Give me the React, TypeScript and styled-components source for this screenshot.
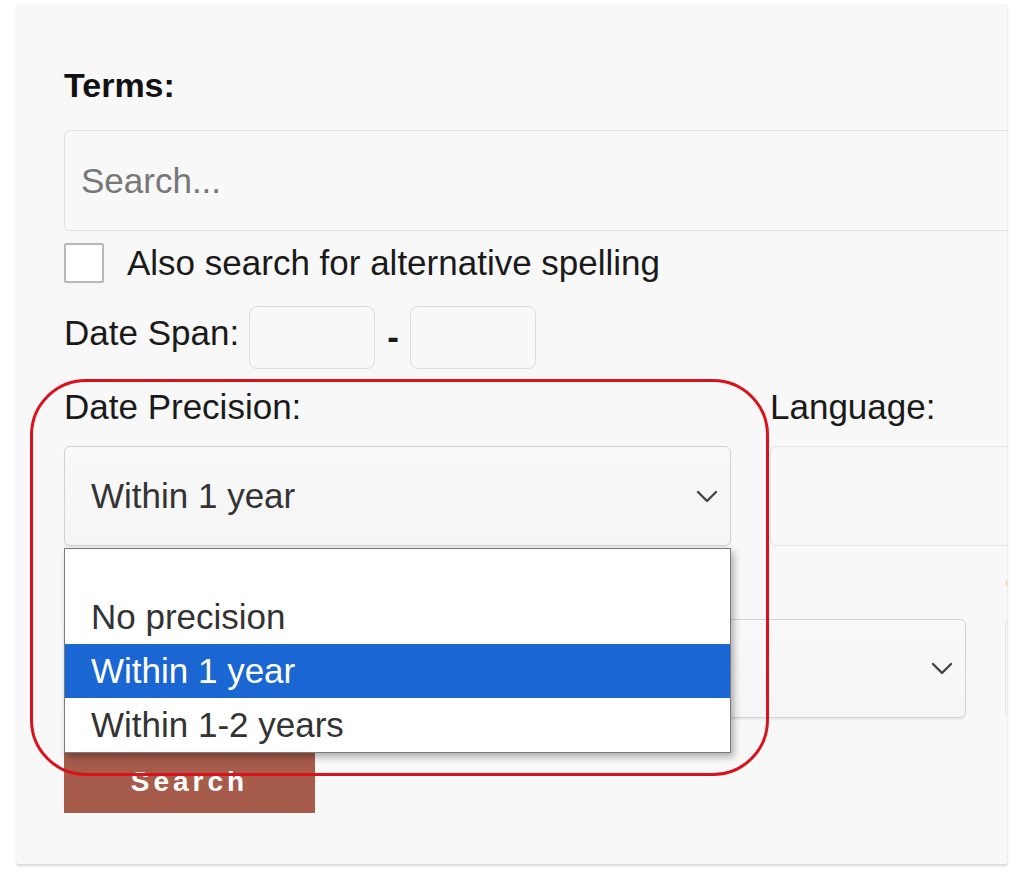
import styled, { createGlobalStyle } from "styled-components";

const GlobalStyle = createGlobalStyle`
  html, body {
    margin: 0;
    padding: 0;
    background: #fff;
  }
  body {
    font-family: "Liberation Sans", Arial, sans-serif;
    color: #1a1a1a;
  }
`;

const precisionOptions = ["", "No precision", "Within 1 year", "Within 1-2 years"];

const Chevron = () => (
  <svg width="22" height="13" viewBox="0 0 22 13" fill="none">
    <polyline
      points="2,2 11,11 20,2"
      stroke="#444"
      strokeWidth="2.4"
      strokeLinecap="round"
      strokeLinejoin="round"
    />
  </svg>
);

const App = () => {
  return (
    <Page>
      <GlobalStyle />
      <Panel>
        <Form>
          <TermsLabel>Terms:</TermsLabel>
          <SearchInput placeholder="Search..." />

          <CheckRow>
            <CheckBox />
            <Text>Also search for alternative spelling</Text>
          </CheckRow>

          <DateSpanRow>
            <SpanLabel>Date Span:</SpanLabel>
            <YearInput />
            <Dash>-</Dash>
            <YearInput />
          </DateSpanRow>

          <FieldRow $cols="667px 1fr" $top={18}>
            <Field $gap={19}>
              <Text>Date Precision:</Text>
              <SelectWrap>
                <SelectBox $height={100}>
                  <span>Within 1 year</span>
                  <Chevron />
                </SelectBox>
                <DropList>
                  {precisionOptions.map((opt, i) => (
                    <Option key={i} $selected={opt === "Within 1 year"} $empty={opt === ""}>
                      {opt}
                    </Option>
                  ))}
                </DropList>
              </SelectWrap>
            </Field>
            <Field $gap={19}>
              <Text>Language:</Text>
              <PlainBox $height={100} />
            </Field>
          </FieldRow>

          <FieldRow $cols="431px 432px 1fr" $top={17}>
            <Field $gap={16}>
              <Text>Source:</Text>
              <SelectBox $height={99}>
                <span />
                <Chevron />
              </SelectBox>
            </Field>
            <Field $gap={16}>
              <Text>Type:</Text>
              <SelectBox $height={99}>
                <span />
                <Chevron />
              </SelectBox>
            </Field>
            <Field $gap={16}>
              <Text>Collection:</Text>
              <PlainBox $height={99} />
            </Field>
          </FieldRow>

          <SearchButton>Search</SearchButton>
        </Form>
      </Panel>
      <Highlight />
    </Page>
  );
};

const Page = styled.div`
  position: relative;
  width: 1024px;
  height: 880px;
  overflow: hidden;
`;

const Panel = styled.div`
  margin: 4px 0 0 16px;
  width: 992px;
  height: 862px;
  box-sizing: border-box;
  padding: 61px 0 0 48px;
  background: #f8f8f8;
  border-radius: 4px;
  border-bottom: 2px solid #dedede;
  border-right: 1px solid #ececec;
  box-shadow: 0 1px 2px rgba(0, 0, 0, 0.08);
  overflow: hidden;
`;

const Form = styled.div`
  width: 1400px;
  display: flex;
  flex-direction: column;
  align-items: flex-start;
`;

const Text = styled.div`
  font-size: 35px;
  line-height: 40px;
  color: #1a1a1a;
  white-space: nowrap;
`;

const TermsLabel = styled(Text)`
  font-weight: bold;
  font-size: 34px;
  color: #111;
`;

const SearchInput = styled.input`
  margin-top: 25px;
  width: 100%;
  height: 101px;
  box-sizing: border-box;
  padding: 0 16px;
  border: 1px solid #e0e0e0;
  border-radius: 6px;
  background: #f8f8f8;
  font-family: "Liberation Sans", Arial, sans-serif;
  font-size: 35px;
  color: #333;
  outline: none;

  &::placeholder {
    color: #777;
  }
`;

const CheckRow = styled.div`
  margin-top: 12px;
  height: 40px;
  display: flex;
  align-items: center;
  gap: 23px;
`;

const CheckBox = styled.div`
  width: 40px;
  height: 40px;
  box-sizing: border-box;
  background: #fff;
  border: 2px solid #b8b8b8;
  border-radius: 2px;
`;

const DateSpanRow = styled.div`
  margin-top: 23px;
  height: 63px;
  display: flex;
  align-items: flex-start;
`;

const SpanLabel = styled(Text)`
  padding-top: 7px;
  margin-right: 10px;
`;

const YearInput = styled.div`
  width: 126px;
  height: 63px;
  box-sizing: border-box;
  border: 1px solid #dcdcdc;
  border-radius: 8px;
  background: #f8f8f8;
`;

const Dash = styled(Text)`
  padding-top: 11px;
  margin: 0 11px 0 12px;
  font-weight: bold;
`;

const FieldRow = styled.div<{ $cols: string; $top: number }>`
  margin-top: ${(p) => p.$top}px;
  width: 100%;
  display: grid;
  grid-template-columns: ${(p) => p.$cols};
  column-gap: 39px;
`;

const Field = styled.div<{ $gap: number }>`
  display: flex;
  flex-direction: column;
  gap: ${(p) => p.$gap}px;
`;

const SelectWrap = styled.div`
  position: relative;
`;

const SelectBox = styled.div<{ $height: number }>`
  height: ${(p) => p.$height}px;
  box-sizing: border-box;
  display: flex;
  align-items: center;
  justify-content: space-between;
  padding: 0 12px 0 26px;
  border: 1px solid #d2d2d2;
  border-radius: 6px;
  background: linear-gradient(#f9f9f9, #f5f5f5);
  box-shadow: 0 2px 2px rgba(0, 0, 0, 0.06);
  font-size: 35px;
  color: #333;
`;

const PlainBox = styled.div<{ $height: number }>`
  height: ${(p) => p.$height}px;
  box-sizing: border-box;
  border: 1px solid #e4e4e4;
  border-radius: 6px;
  background: #f8f8f8;
`;

const DropList = styled.div`
  position: absolute;
  top: 102px;
  left: 0;
  width: 100%;
  box-sizing: border-box;
  background: #fff;
  border: 1px solid #7a7a7a;
  box-shadow: 3px 4px 7px rgba(0, 0, 0, 0.3);
  z-index: 5;
`;

const Option = styled.div<{ $selected?: boolean; $empty?: boolean }>`
  height: ${(p) => (p.$empty ? 41 : 54)}px;
  display: flex;
  align-items: center;
  padding-left: 26px;
  font-size: 35px;
  background: ${(p) => (p.$selected ? "#1a66d2" : "#fff")};
  color: ${(p) => (p.$selected ? "#fff" : "#333")};
`;

const SearchButton = styled.button`
  margin-top: 32px;
  width: 251px;
  height: 63px;
  border: none;
  background: #a65b4b;
  color: #fff;
  font-family: "Liberation Sans", Arial, sans-serif;
  font-weight: bold;
  font-size: 28px;
  letter-spacing: 4px;
`;

const Highlight = styled.div`
  position: absolute;
  left: 30px;
  top: 379px;
  width: 739px;
  height: 397px;
  box-sizing: border-box;
  border: 3px solid #d9121b;
  border-radius: 56px;
  pointer-events: none;
  z-index: 10;
`;

export default App;
